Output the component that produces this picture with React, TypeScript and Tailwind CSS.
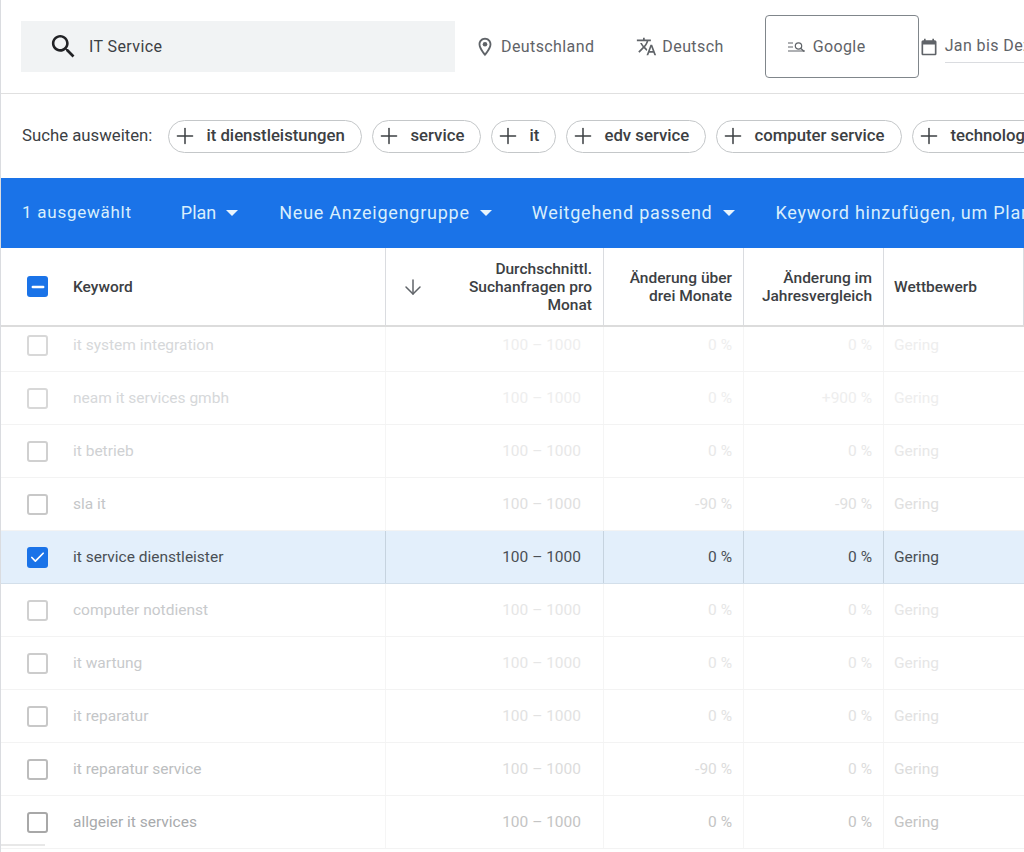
import { ArrowDown, Check, Minus, Plus } from "lucide-react";

const chips = [
  { label: "it dienstleistungen", width: "w-[194px]" },
  { label: "service", width: "w-[109px]" },
  { label: "it", width: "w-[65px]" },
  { label: "edv service", width: "w-[140px]" },
  { label: "computer service", width: "w-[186px]" },
  { label: "technologie", width: "w-[150px]" },
];

const menus = [
  { label: "Plan", margin: "ml-[27px]", text: "tracking-normal", arrow: "ml-[10px]" },
  { label: "Neue Anzeigengruppe", margin: "ml-[41px]", text: "", arrow: "ml-[10px]" },
  { label: "Weitgehend passend", margin: "ml-[40px]", text: "", arrow: "ml-[10px]" },
];

const rows = [
  { name: "it system integration", three: "0 %", year: "0 %", h: "h-[45px]", pad: "pb-[8px]", kw: "text-[#d6d8da]", num: "text-[#eeeeee]", box: "border-[#d8d8d8]" },
  { name: "neam it services gmbh", three: "0 %", year: "+900 %", h: "h-[53px]", pad: "", kw: "text-[#d6d8da]", num: "text-[#eeeeee]", box: "border-[#d8d8d8]" },
  { name: "it betrieb", three: "0 %", year: "0 %", h: "h-[53px]", pad: "", kw: "text-[#cfd1d3]", num: "text-[#e8e8e8]", box: "border-[#d0d0d0]" },
  { name: "sla it", three: "-90 %", year: "-90 %", h: "h-[53px]", pad: "", kw: "text-[#c4c6c8]", num: "text-[#e0e0e0]", box: "border-[#c8c8c8]" },
  { name: "it service dienstleister", three: "0 %", year: "0 %", h: "h-[53px]", pad: "", kw: "text-[#4a4f55]", num: "text-[#4a4f55]", box: "", selected: true },
  { name: "computer notdienst", three: "0 %", year: "0 %", h: "h-[53px]", pad: "", kw: "text-[#c8cacc]", num: "text-[#e6e6e6]", box: "border-[#d0d0d0]" },
  { name: "it wartung", three: "0 %", year: "0 %", h: "h-[53px]", pad: "", kw: "text-[#c8cacc]", num: "text-[#e6e6e6]", box: "border-[#cccccc]" },
  { name: "it reparatur", three: "0 %", year: "0 %", h: "h-[53px]", pad: "", kw: "text-[#c4c6c8]", num: "text-[#e2e2e2]", box: "border-[#c8c8c8]" },
  { name: "it reparatur service", three: "-90 %", year: "0 %", h: "h-[53px]", pad: "", kw: "text-[#bcbec0]", num: "text-[#dcdcdc]", box: "border-[#bcbcbc]" },
  { name: "allgeier it services", three: "0 %", year: "0 %", h: "h-[53px]", pad: "", kw: "text-[#a8aaac]", num: "text-[#c4c4c4]", box: "border-[#a8a8a8]" },
];

const App = () => {
  return (
    <div className="relative w-[1024px] h-[852px] overflow-hidden bg-white border-l border-[#dadce0] font-['Roboto',sans-serif] text-[#3c4043]">
      {/* top filters */}
      <div className="flex items-center h-[94px] border-b border-[#e0e0e0] pl-5 whitespace-nowrap text-[16px] tracking-[0.4px]">
        <div className="flex items-center shrink-0 w-[434px] h-[51px] bg-[#f1f3f4] pl-[27px]">
          <svg width="31" height="31" viewBox="0 0 24 24" fill="#202124">
            <path d="M15.5 14h-.79l-.28-.27C15.41 12.59 16 11.11 16 9.5 16 5.91 13.09 3 9.5 3S3 5.91 3 9.5 5.91 16 9.5 16c1.61 0 3.09-.59 4.23-1.57l.27.28v.79l5 4.99L20.49 19l-4.99-5zm-6 0C7.01 14 5 11.99 5 9.5S7.01 5 9.5 5 14 7.01 14 9.5 11.99 14 9.5 14z" />
          </svg>
          <span className="ml-[10px]">IT Service</span>
        </div>
        <svg className="ml-[19px] shrink-0" width="22" height="22" viewBox="0 0 24 24" fill="#5f6368">
          <path d="M12 2C8.13 2 5 5.13 5 9c0 5.25 7 13 7 13s7-7.75 7-13c0-3.87-3.13-7-7-7zM7 9c0-2.76 2.24-5 5-5s5 2.24 5 5c0 2.88-2.88 7.19-5 9.88C9.92 16.21 7 11.85 7 9z" />
          <circle cx="12" cy="9" r="2.5" />
        </svg>
        <span className="ml-[5px] text-[#5f6368]">Deutschland</span>
        <svg className="ml-[42px] shrink-0" width="21" height="21" viewBox="0 0 24 24" fill="#5f6368">
          <path d="M12.87 15.07l-2.54-2.51.03-.03c1.74-1.94 2.98-4.17 3.71-6.53H17V4h-7V2H8v2H1v1.99h11.17C11.5 7.92 10.44 9.75 9 11.35 8.07 10.32 7.3 9.19 6.69 8h-2c.73 1.63 1.73 3.17 2.98 4.56l-5.09 5.02L4 19l5-5 3.11 3.11.76-2.04zM18.5 10h-2L12 22h2l1.12-3h4.75L21 22h2l-4.5-12zm-2.62 7l1.62-4.33L19.12 17h-3.24z" />
        </svg>
        <span className="ml-[5px] text-[#5f6368]">Deutsch</span>
        <div className="flex items-center shrink-0 ml-[41px] w-[154px] h-[63px] border border-[#80868b] rounded pl-[22px] text-[#5f6368]">
          <svg width="18" height="12" viewBox="0 0 18 12" fill="none" stroke="#5f6368" strokeWidth="1.2">
            <path d="M0 2h5M0 6h5M0 10h17" />
            <circle cx="10.5" cy="5" r="3.2" />
            <path d="M13 7.5l3 3" />
          </svg>
          <span className="ml-[7px]">Google</span>
        </div>
        <svg className="shrink-0" width="20" height="20" viewBox="0 0 24 24" fill="#5f6368">
          <path d="M19 4h-1V2h-2v2H8V2H6v2H5c-1.1 0-2 .9-2 2v14c0 1.1.9 2 2 2h14c1.1 0 2-.9 2-2V6c0-1.1-.9-2-2-2zm0 16H5V9h14v11z" />
        </svg>
        <div className="ml-[6px] shrink-0 h-[32px] w-[90px] border-b border-[#dadce0] text-[#5f6368] leading-[30px]">Jan bis Dez</div>
      </div>

      {/* suggestions */}
      <div className="flex items-center h-[84px] pl-[21px] whitespace-nowrap">
        <span className="text-[16.75px] text-[#3c4043]">Suche ausweiten:</span>
        <div className="flex ml-[16px] gap-[10px]">
          {chips.map((chip) => (
            <div
              key={chip.label}
              className={`flex items-center shrink-0 h-[33px] border border-[#c4c7c9] rounded-full pl-[3px] ${chip.width}`}
            >
              <Plus size={26} strokeWidth={1.4} className="text-[#3c4043] shrink-0" />
              <span className="ml-[8px] text-[16.75px] font-medium text-[#3c4043]">{chip.label}</span>
            </div>
          ))}
        </div>
      </div>

      {/* blue action bar */}
      <div className="flex items-center h-[70px] bg-[#1a73e8] pl-[21px] pb-[1px] whitespace-nowrap text-[18px] tracking-[0.75px] text-[#d8eefc]">
        <span className="text-[17px]">1 ausgewählt</span>
        <div className="ml-[22px] w-px h-[41px] bg-[#9cc3f5]" />
        {menus.map((menu) => (
          <div key={menu.label} className={`flex items-center shrink-0 ${menu.margin}`}>
            <span className={menu.text}>{menu.label}</span>
            <div className={`${menu.arrow} w-0 h-0 border-x-[6px] border-x-transparent border-t-[6px] border-t-[#e8f4fd]`} />
          </div>
        ))}
        <span className="ml-[41px]">Keyword hinzufügen, um Plan zu erstellen</span>
      </div>

      {/* table header */}
      <div className="grid grid-cols-[385px_218px_140px_140px_140px] h-[79px] border-b-2 border-[#dcdcdc] text-[15.5px] leading-[18px] font-medium text-[#3c4043]">
        <div className="flex items-center pl-[26px] border-r border-[#dadce0]">
          <div className="flex items-center justify-center w-[21px] h-[21px] rounded-[3px] bg-[#1a73e8]">
            <Minus size={18} strokeWidth={3.2} className="text-white" />
          </div>
          <span className="ml-[25px]">Keyword</span>
        </div>
        <div className="flex items-center pl-[15px] pr-[11px] border-r border-[#dadce0]">
          <ArrowDown size={24} strokeWidth={1.5} className="text-[#5f6368]" />
          <span className="flex-1 text-right">
            Durchschnittl.
            <br />
            Suchanfragen pro
            <br />
            Monat
          </span>
        </div>
        <div className="flex items-center justify-end pr-[11px] text-right border-r border-[#dadce0]">
          <span>
            Änderung über
            <br />
            drei Monate
          </span>
        </div>
        <div className="flex items-center justify-end pr-[11px] text-right border-r border-[#dadce0]">
          <span>
            Änderung im
            <br />
            Jahresvergleich
          </span>
        </div>
        <div className="flex items-center pl-[10px] border-r border-[#dadce0]">Wettbewerb</div>
      </div>

      {/* keyword rows */}
      {rows.map((row) => (
        <div
          key={row.name}
          className={`grid grid-cols-[385px_218px_140px_140px_140px] items-stretch border-b text-[15.5px] ${row.h} ${
            row.selected ? "bg-[#e3effb] border-[#d3dfea]" : "border-[#f3f3f3]"
          }`}
        >
          <div className={`flex items-center pl-[26px] border-r ${row.pad} ${row.selected ? "border-[#c6d3df]" : "border-[#f5f5f5]"}`}>
            {row.selected ? (
              <div className="flex items-center justify-center w-[21px] h-[21px] rounded-[3px] bg-[#1a73e8]">
                <Check size={17} strokeWidth={2.4} className="text-white" />
              </div>
            ) : (
              <div className={`w-[21px] h-[21px] rounded-[3px] border-2 ${row.box}`} />
            )}
            <span className={`ml-[25px] pt-[2px] ${row.kw}`}>{row.name}</span>
          </div>
          <div className={`flex items-center justify-end pr-[22px] border-r ${row.pad} ${row.num} ${row.selected ? "border-[#c6d3df]" : "border-[#f5f5f5]"}`}>
            <span className="pt-[2px]">100 – 1000</span>
          </div>
          <div className={`flex items-center justify-end pr-[11px] border-r ${row.pad} ${row.num} ${row.selected ? "border-[#c6d3df]" : "border-[#f5f5f5]"}`}>
            <span className="pt-[2px]">{row.three}</span>
          </div>
          <div className={`flex items-center justify-end pr-[11px] border-r ${row.pad} ${row.num} ${row.selected ? "border-[#c6d3df]" : "border-[#f5f5f5]"}`}>
            <span className="pt-[2px]">{row.year}</span>
          </div>
          <div className={`flex items-center pl-[10px] ${row.pad} ${row.num}`}>
            <span className="pt-[2px]">Gering</span>
          </div>
        </div>
      ))}

      {/* scrollbar stub */}
      <div className="absolute left-0 bottom-[6px] w-[44px] h-[2px] bg-[#e8e8e8]" />
    </div>
  );
};

export default App;
